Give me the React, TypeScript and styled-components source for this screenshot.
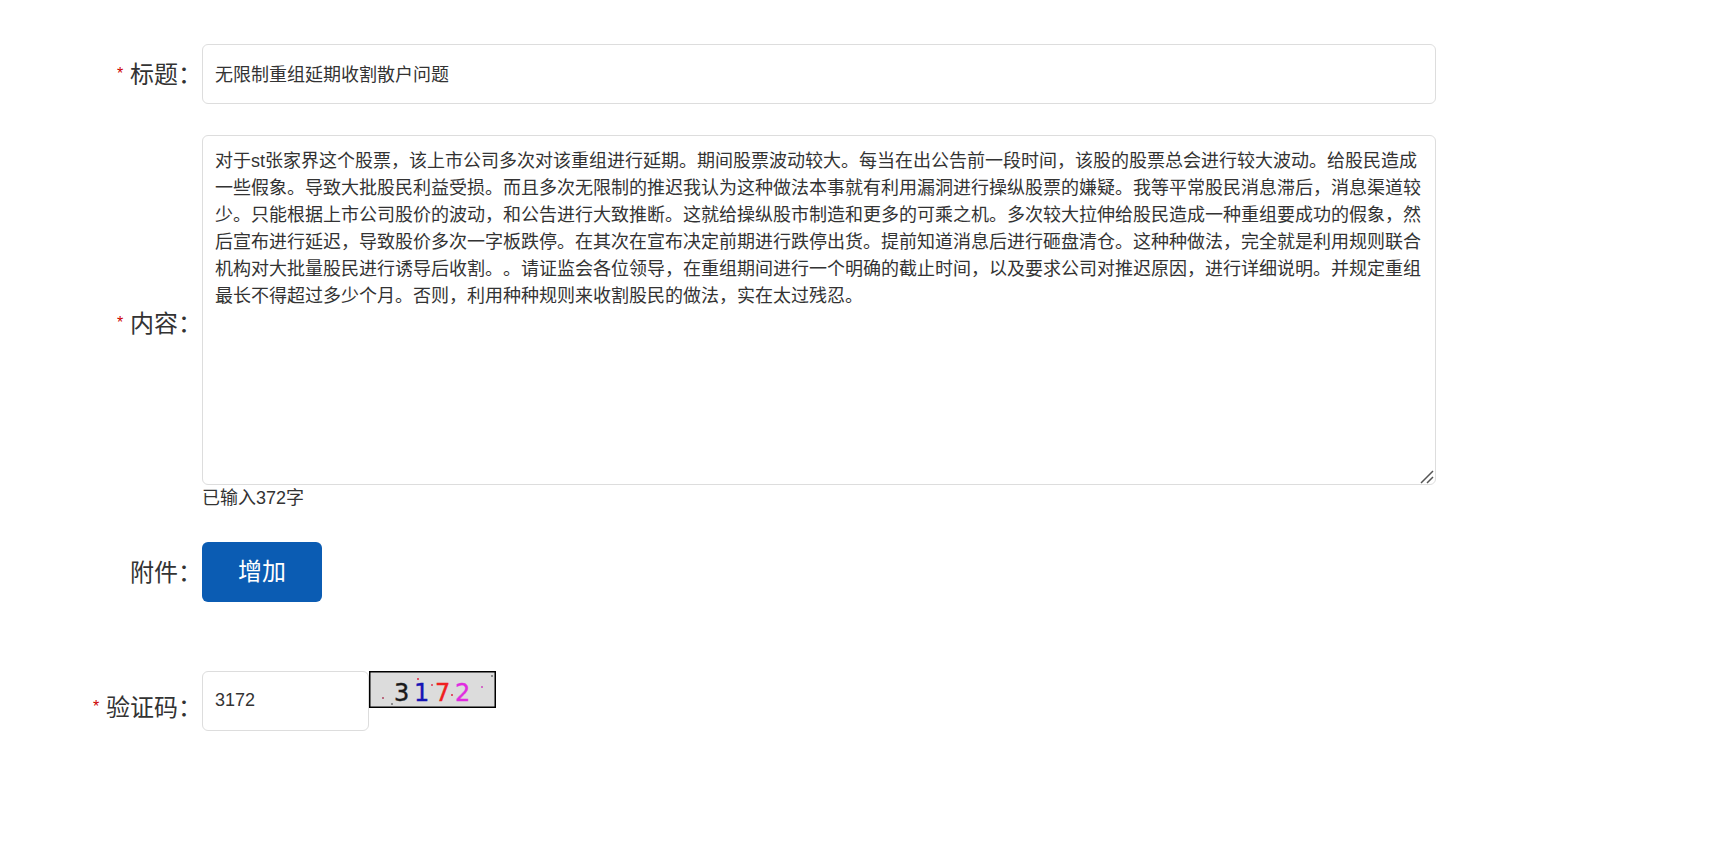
import React, { useState } from "react";
import styled, { createGlobalStyle } from "styled-components";

const GlobalStyle = createGlobalStyle`
  *, *::before, *::after { box-sizing: border-box; }
  body {
    margin: 0;
    background: #fff;
    color: #333;
    font-family: "Liberation Sans", "Noto Sans CJK SC", sans-serif;
    font-size: 18px;
    line-height: 27px;
    text-spacing-trim: space-all;
  }
  input, textarea, button { font: inherit; color: inherit; margin: 0; }
`;

const Form = styled.form`
  display: flex;
  flex-direction: column;
  gap: 31px;
  width: 83.25%;
  padding: 44px 0 32px;
`;

const Row = styled.div<{ $spaced?: boolean }>`
  display: grid;
  grid-template-columns: 202px minmax(0, 1fr);
  align-items: center;
  min-height: ${(p) => (p.$spaced ? "72px" : "60px")};
  margin-top: ${(p) => (p.$spaced ? "38px" : "0")};
`;

const Label = styled.label`
  padding-top: 2px;
  font-size: 24px;
  line-height: 36px;
  text-align: right;
  white-space: nowrap;
`;

const Required = styled.span`
  color: #c00;
  font-size: 16px;
  line-height: 16px;
  vertical-align: 4px;
`;

const Field = styled.div`
  display: flex;
  flex-direction: column;
  align-items: flex-start;
  height: 376px;
`;

const TextInput = styled.input<{ $short?: boolean }>`
  width: ${(p) => (p.$short ? "167px" : "100%")};
  height: 60px;
  padding: 0 12px 2px;
  border: 1px solid #ddd;
  border-radius: 6px;
  background: #fff;
  outline: none;
`;

const AreaWrap = styled.div`
  position: relative;
  display: flex;
  width: 100%;
`;

const TextArea = styled.textarea`
  width: 100%;
  height: 350px;
  padding: 12px;
  border: 1px solid #ddd;
  border-radius: 6px;
  background: #fff;
  outline: none;
  resize: none;
  overflow: auto;
  text-spacing-trim: space-all;
`;

const Grip = styled.svg`
  position: absolute;
  right: 2px;
  bottom: 1px;
  pointer-events: none;
`;

const AddButton = styled.button`
  width: 120px;
  height: 60px;
  padding: 0;
  border: 0;
  border-radius: 6px;
  background: #0b5cb3;
  color: #fff;
  font-size: 24px;
  line-height: 36px;
  cursor: pointer;
`;

const CaptchaField = styled.div`
  display: flex;
  align-items: flex-start;
  align-self: start;
`;

const Captcha = styled.svg`
  display: block;
  font-family: "DejaVu Sans", sans-serif;
  font-size: 24px;
`;

const CONTENT =
  "对于st张家界这个股票，该上市公司多次对该重组进行延期。期间股票波动较大。每当在出公告前一段时间，该股的股票总会进行较大波动。给股民造成一些假象。导致大批股民利益受损。而且多次无限制的推迟我认为这种做法本事就有利用漏洞进行操纵股票的嫌疑。我等平常股民消息滞后，消息渠道较少。只能根据上市公司股价的波动，和公告进行大致推断。这就给操纵股市制造和更多的可乘之机。多次较大拉伸给股民造成一种重组要成功的假象，然后宣布进行延迟，导致股价多次一字板跌停。在其次在宣布决定前期进行跌停出货。提前知道消息后进行砸盘清仓。这种种做法，完全就是利用规则联合机构对大批量股民进行诱导后收割。。请证监会各位领导，在重组期间进行一个明确的截止时间，以及要求公司对推迟原因，进行详细说明。并规定重组最长不得超过多少个月。否则，利用种种规则来收割股民的做法，实在太过残忍。";

const DIGITS = [
  { char: "3", x: 25, color: "#1a1a1a" },
  { char: "1", x: 45, color: "#1515b5" },
  { char: "7", x: 66, color: "#f02020" },
  { char: "2", x: 86, color: "#e02be0" },
];

const SPECKS = [
  { x: 13, y: 26, color: "#b0506a" },
  { x: 22, y: 32, color: "#777" },
  { x: 48, y: 7, color: "#e0304a" },
  { x: 62, y: 13, color: "#e0405a" },
  { x: 82, y: 23, color: "#e0304a" },
  { x: 112, y: 15, color: "#d050c0" },
  { x: 122, y: 4, color: "#777" },
];

export default function App() {
  const [title, setTitle] = useState("无限制重组延期收割散户问题");
  const [content, setContent] = useState(CONTENT);
  const [code, setCode] = useState("3172");

  return (
    <>
      <GlobalStyle />
      <Form onSubmit={(e) => e.preventDefault()}>
        <Row>
          <Label htmlFor="title">
            <Required>*</Required> 标题：
          </Label>
          <TextInput id="title" value={title} onChange={(e) => setTitle(e.target.value)} />
        </Row>
        <Row>
          <Label htmlFor="content">
            <Required>*</Required> 内容：
          </Label>
          <Field>
            <AreaWrap>
              <TextArea
                id="content"
                spellCheck={false}
                value={content}
                onChange={(e) => setContent(e.target.value)}
              />
              <Grip width="14" height="14" viewBox="0 0 14 14" stroke="#555" strokeWidth="1.5" aria-hidden="true">
                <path d="M1 13 13 1M7 13l6-6" />
              </Grip>
            </AreaWrap>
            <span>已输入372字</span>
          </Field>
        </Row>
        <Row>
          <Label htmlFor="attachment">附件：</Label>
          <AddButton id="attachment" type="button">
            增加
          </AddButton>
        </Row>
        <Row $spaced>
          <Label htmlFor="code">
            <Required>*</Required> 验证码：
          </Label>
          <CaptchaField>
            <TextInput id="code" $short value={code} onChange={(e) => setCode(e.target.value)} />
            <Captcha width="127" height="37" viewBox="0 0 127 37" role="img" aria-label="3172">
              <rect x="0.75" y="0.75" width="125.5" height="35.5" fill="#dcdcdc" stroke="#000" strokeWidth="1.5" />
              {SPECKS.map((s) => (
                <rect key={s.x} x={s.x} y={s.y} width="2" height="2" fill={s.color} opacity="0.8" />
              ))}
              {DIGITS.map((d) => (
                <text key={d.char} x={d.x} y="30" fill={d.color} stroke={d.color} strokeWidth="0.4">
                  {d.char}
                </text>
              ))}
            </Captcha>
          </CaptchaField>
        </Row>
      </Form>
    </>
  );
}
